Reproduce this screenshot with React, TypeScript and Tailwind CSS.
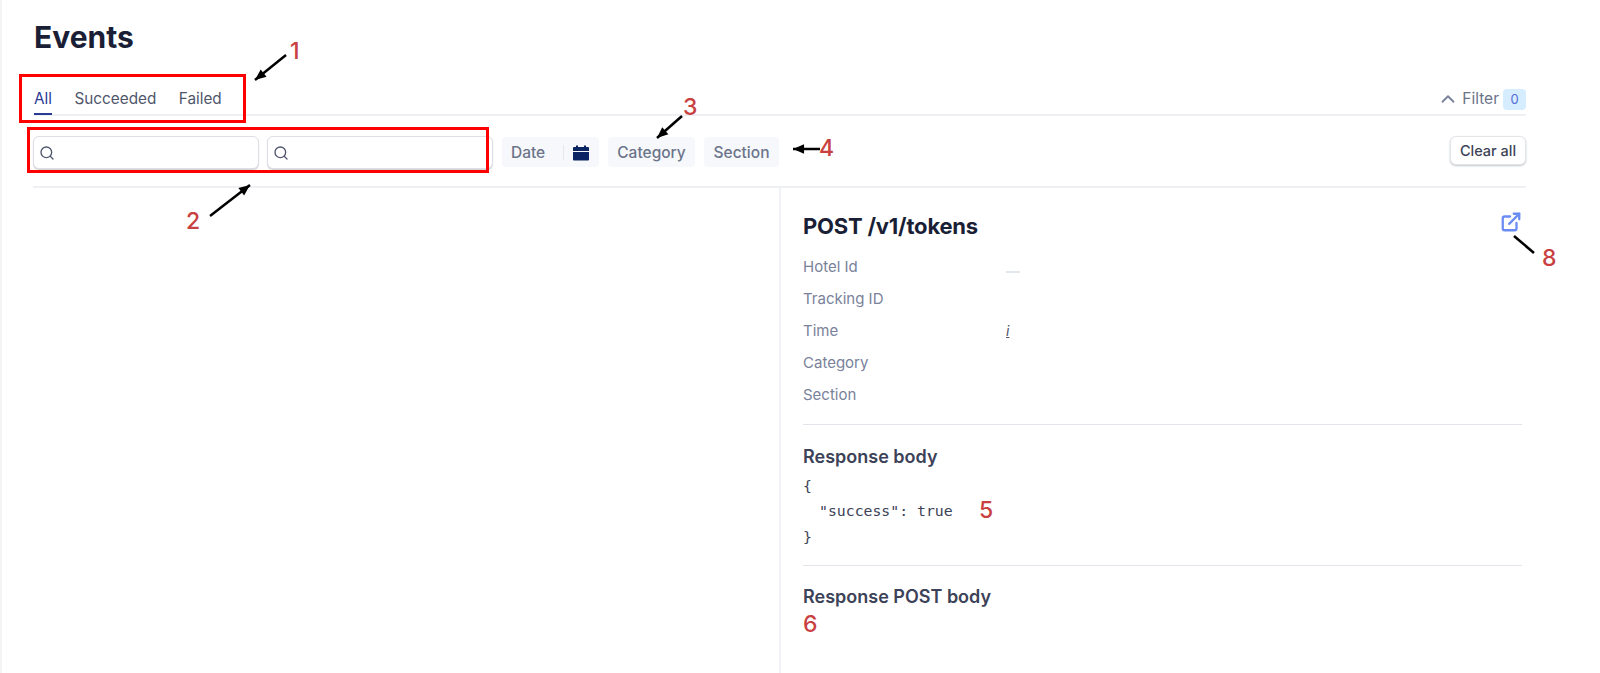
import React from "react";
import { ChevronUp, ExternalLink, Search } from "lucide-react";

const sans = "font-['Inter','Noto_Sans',sans-serif]";

const SearchBox: React.FC = () => (
  <div className="flex h-[33px] w-[226px] items-center rounded-md border border-[#dcdfe4] bg-white pl-[5px] shadow-[0_1px_1px_rgba(60,66,87,0.25)]">
    <Search className="h-[16px] w-[16px] text-[#4f566b]" strokeWidth={2} />
  </div>
);

const Chip: React.FC<{ label: string; width: string }> = ({ label, width }) => (
  <div className={`mt-[1px] flex h-[30px] items-center justify-center rounded bg-[#f6f8fc] pt-[1px] text-[15.5px] font-medium text-[#6b7489] ${width}`}>
    {label}
  </div>
);

const MetaRow: React.FC<{ label: string; children?: React.ReactNode }> = ({ label, children }) => (
  <div className="flex h-[32px] items-center text-[15px] text-[#79829a]">
    <div className="w-[203px]">{label}</div>
    {children}
  </div>
);

// annotation arrow, drawn over the page
const Arrow: React.FC<{ x1: number; y1: number; x2: number; y2: number }> = ({ x1, y1, x2, y2 }) => {
  const a = Math.atan2(y2 - y1, x2 - x1);
  const l = 12;
  const w = 0.4;
  const p = `${x2},${y2} ${x2 - l * Math.cos(a - w)},${y2 - l * Math.sin(a - w)} ${x2 - l * Math.cos(a + w)},${y2 - l * Math.sin(a + w)}`;
  return (
    <>
      <line x1={x1} y1={y1} x2={x2} y2={y2} stroke="#000" strokeWidth="2.5" />
      <polygon points={p} fill="#000" />
    </>
  );
};

const Num: React.FC<{ n: number; className: string }> = ({ n, className }) => (
  <span className={`absolute text-[23px] leading-none font-medium text-[#c94040] ${className}`}>{n}</span>
);

const App: React.FC = () => {
  return (
    <div className={`relative h-[673px] w-[1600px] overflow-hidden border-l-2 border-[#f3f4f6] bg-white ${sans}`}>
      <div className="pl-[31px] pr-[74px]">
        <h1 className="flex h-[74px] items-center pl-[1px] text-[30px] leading-none font-bold text-[#1a1f36]">Events</h1>

        {/* Tabs + filter toggle */}
        <div className="flex h-[42px] items-start justify-between border-b-2 border-[#eef0f4] pt-[15px]">
          <div className="flex gap-[22.500px] text-[15.300px] leading-[20px] text-[#4f566b]">
            <div className="ml-[1px] h-[26px] border-b-2 border-[#2a3b94] text-[#2a3b94]">All</div>
            <div>Succeeded</div>
            <div>Failed</div>
          </div>
          <div className="mt-[-1px] flex items-center text-[15.500px] leading-[20px] text-[#6b7489]">
            <ChevronUp className="mr-[3px] h-[22px] w-[22px] text-[#79829a]" strokeWidth={2} />
            Filter
            <span className="ml-[4px] flex h-[21px] w-[23px] items-center justify-center rounded bg-[#d6ecff] text-[13px] text-[#556cd6]">0</span>
          </div>
        </div>

        {/* Filter bar */}
        <div className="flex h-[72px] items-start justify-between border-b-2 border-[#eef0f4] pt-[20px]">
          <div className="flex items-start">
            <SearchBox />
            <div className="ml-[8px]"><SearchBox /></div>
            <div className="mt-[1px] ml-[9px] flex h-[30px] w-[97px] items-center rounded bg-[#f6f8fc] pt-[1px] pl-[9px] text-[15.500px] font-medium text-[#6b7489]">
              Date
              <div className="ml-[18px] h-[15px] w-px bg-[#e3e8ee]" />
              <svg className="ml-[8px] h-[18px] w-[18px]" viewBox="0 0 18 18" fill="#0a2463">
                <path d="M1 8h16v7.500a1 1 0 0 1-1 1H2a1 1 0 0 1-1-1z" />
                <path d="M2 3h14a1 1 0 0 1 1 1v3H1V4a1 1 0 0 1 1-1z" />
                <rect x="4" y="1.500" width="2" height="2.500" />
                <rect x="12" y="1.500" width="2" height="2.500" />
              </svg>
            </div>
            <Chip label="Category" width="ml-[9px] w-[87px]" />
            <Chip label="Section" width="ml-[9px] w-[75px]" />
          </div>
          <button className="h-[29px] w-[76px] rounded-md border border-[#e3e5e9] bg-white text-[14.500px] font-medium text-[#3c4257] shadow-[0_1px_2px_rgba(60,66,87,0.3)]">
            Clear all
          </button>
        </div>

        {/* Body */}
        <div className="flex">
          <div className="h-[485px] w-[748px] border-r-2 border-[#f1f2f6]" />
          <div className="flex-1 pl-[22px] pr-[4px]">
            <div className="flex h-[61px] items-center justify-between pt-[16px]">
              <h2 className="text-[22px] font-bold tracking-[-0.2px] text-[#1a1f36]">POST /v1/tokens</h2>
              <ExternalLink className="mb-[10px] h-[22px] w-[22px] text-[#6c8cf5]" strokeWidth={2.5} />
            </div>
            <div className="mt-[2px]">
              <MetaRow label="Hotel Id"><div className="mt-[10px] h-[2px] w-[14px] bg-[#e3e8ee]" /></MetaRow>
              <MetaRow label="Tracking ID" />
              <MetaRow label="Time"><span className="text-[14px] leading-none text-[#4f566b] italic underline">i</span></MetaRow>
              <MetaRow label="Category" />
              <MetaRow label="Section" />
            </div>
            <div className="mt-[12.500px] border-t border-[#e3e5ec] pt-[22px]">
              <h3 className="text-[18px] leading-[20px] font-semibold text-[#3c4257]">Response body</h3>
              <div className="mt-[6px] font-['DejaVu_Sans_Mono',monospace] text-[14.800px] leading-[25.500px] text-[#3c4257]">
                <div>{"{"}</div>
                <div className="pl-[16px]">"success": true</div>
                <div>{"}"}</div>
              </div>
            </div>
            <div className="mt-[16px] border-t border-[#e3e5ec] pt-[21px]">
              <h3 className="text-[18px] leading-[20px] font-semibold text-[#3c4257]">Response POST body</h3>
            </div>
          </div>
        </div>
      </div>

      {/* Annotations drawn on top of the screenshot */}
      <div className="absolute top-[74px] left-[17px] h-[49px] w-[227px] border-[3px] border-[#ff0000]" />
      <div className="absolute top-[127px] left-[25px] h-[46px] w-[462px] border-[3px] border-[#ff0000]" />
      <svg className="absolute top-0 left-[-2px] h-[673px] w-[1600px]" viewBox="0 0 1600 673" fill="none">
        <Arrow x1={286} y1={55} x2={255} y2={80} />
        <Arrow x1={210} y1={216} x2={250} y2={185} />
        <Arrow x1={682} y1={116} x2={657} y2={138} />
        <Arrow x1={820} y1={149} x2={793} y2={149} />
        <line x1={1534} y1={253} x2={1514} y2={236} stroke="#000" strokeWidth="2.5" />
      </svg>
      <Num n={1} className="top-[40px] left-[288px]" />
      <Num n={2} className="top-[210px] left-[184px]" />
      <Num n={3} className="top-[96px] left-[681px]" />
      <Num n={4} className="top-[137px] left-[817px]" />
      <Num n={5} className="top-[499px] left-[977px]" />
      <Num n={6} className="top-[613px] left-[801px]" />
      <Num n={8} className="top-[247px] left-[1540px]" />
    </div>
  );
};

export default App;
